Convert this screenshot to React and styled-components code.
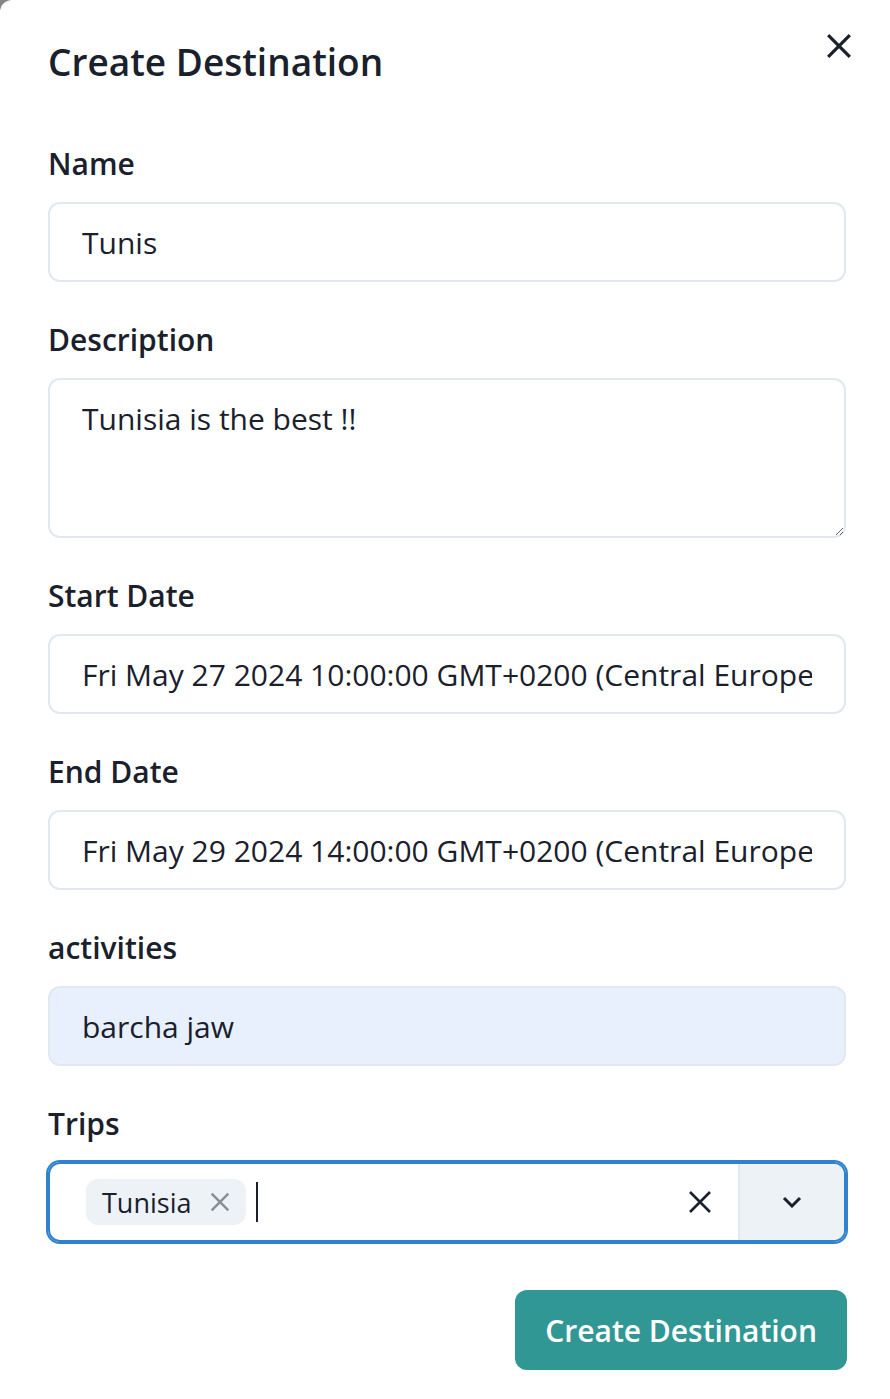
import React from "react";
import styled, { createGlobalStyle } from "styled-components";

const Global = createGlobalStyle`
  html, body { margin: 0; padding: 0; background: #858585; }
  * { box-sizing: border-box; }
  body { font-family: "Open Sans", "Noto Sans", sans-serif; color: #1a202c; }
`;

const Modal = styled.section`
  width: 890px;
  min-height: 1399px;
  background: #fff;
  border-top-left-radius: 12px;
  display: flex;
  flex-direction: column;
`;

const Header = styled.header`
  position: relative;
  padding: 32px 44px 32px 48px;
`;

const Title = styled.h2`
  margin: 0;
  font-size: 37px;
  line-height: 60px;
  font-weight: 600;
  color: #1a202c;
`;

const CloseButton = styled.button`
  position: absolute;
  top: 14px;
  right: 19px;
  width: 64px;
  height: 64px;
  border: 0;
  background: transparent;
  border-radius: 12px;
  display: flex;
  align-items: center;
  justify-content: center;
  padding: 0;
  color: #1a202c;
`;

const Body = styled.div`
  padding: 16px 44px 16px 48px;
  display: flex;
  flex-direction: column;
  gap: 34px;
`;

const Field = styled.div`
  display: flex;
  flex-direction: column;
  gap: 14px;
`;

const Label = styled.label`
  font-size: 30px;
  line-height: 48px;
  font-weight: 600;
  color: #1a202c;
`;

const TextInput = styled.input`
  width: 100%;
  height: 80px;
  padding: 0 32px;
  font: inherit;
  font-size: 30px;
  color: #1a202c;
  background: ${(p) => (p.$autofill ? "#e8f0fe" : "#fff")};
  border: 2px solid #e2e8f0;
  border-radius: 12px;
  outline: none;
`;

const TextArea = styled.textarea`
  width: 100%;
  height: 160px;
  padding: 16px 32px;
  font: inherit;
  font-size: 30px;
  line-height: 1.5;
  color: #1a202c;
  border: 2px solid #e2e8f0;
  border-radius: 12px;
  outline: none;
  resize: vertical;
`;

const SelectBox = styled.div`
  height: 80px;
  border: 2px solid #3182ce;
  box-shadow: 0 0 0 2px #3182ce;
  border-radius: 12px;
  display: flex;
  align-items: stretch;
  overflow: hidden;
`;

const ValueArea = styled.div`
  flex: 1;
  display: flex;
  align-items: center;
  padding: 0 26px 0 36px;
  gap: 10px;
`;

const Tag = styled.span`
  display: inline-flex;
  align-items: center;
  height: 46px;
  padding: 0 16px;
  gap: 18px;
  background: #edf2f7;
  border-radius: 12px;
  font-size: 27px;
  font-weight: 500;
  color: #1a202c;
`;

const TagClose = styled.span`
  display: flex;
  color: #8a8f96;
`;

const Caret = styled.span`
  width: 2px;
  height: 40px;
  background: #1a202c;
`;

const Spacer = styled.div`
  flex: 1;
`;

const ClearIcon = styled.span`
  display: flex;
  color: #1a202c;
`;

const DropArea = styled.div`
  width: 106px;
  background: #edf2f7;
  border-left: 2px solid #e2e8f0;
  display: flex;
  align-items: center;
  justify-content: center;
  color: #1a202c;
`;

const Footer = styled.footer`
  display: flex;
  justify-content: flex-end;
  padding: 32px 43px 32px 48px;
`;

const PrimaryButton = styled.button`
  height: 80px;
  padding: 0 30px;
  border: 0;
  border-radius: 12px;
  background: #319795;
  color: #fff;
  font: inherit;
  font-size: 30px;
  font-weight: 600;
`;

const XIcon = ({ size = 24, stroke = 3 }) => (
  <svg width={size} height={size} viewBox="0 0 24 24" fill="none" stroke="currentColor" strokeWidth={stroke} strokeLinecap="butt">
    <path d="M2 2 L22 22 M22 2 L2 22" />
  </svg>
);

const Chevron = () => (
  <svg width="20" height="12" viewBox="0 0 20 12" fill="none" stroke="currentColor" strokeWidth="3">
    <path d="M2 2 L10 10 L18 2" />
  </svg>
);

export default function App() {
  return (
    <>
      <Global />
      <Modal>
        <Header>
          <Title>Create Destination</Title>
          <CloseButton aria-label="Close">
            <XIcon size={26} stroke={3} />
          </CloseButton>
        </Header>
        <Body>
          <Field>
            <Label>Name</Label>
            <TextInput defaultValue="Tunis" />
          </Field>
          <Field>
            <Label>Description</Label>
            <TextArea defaultValue="Tunisia is the best !!" />
          </Field>
          <Field>
            <Label>Start Date</Label>
            <TextInput defaultValue="Fri May 27 2024 10:00:00 GMT+0200 (Central European Summer Time)" />
          </Field>
          <Field>
            <Label>End Date</Label>
            <TextInput defaultValue="Fri May 29 2024 14:00:00 GMT+0200 (Central European Summer Time)" />
          </Field>
          <Field>
            <Label>activities</Label>
            <TextInput $autofill defaultValue="barcha jaw" />
          </Field>
          <Field>
            <Label>Trips</Label>
            <SelectBox>
              <ValueArea>
                <Tag>
                  Tunisia
                  <TagClose>
                    <XIcon size={20} stroke={3} />
                  </TagClose>
                </Tag>
                <Caret />
                <Spacer />
                <ClearIcon>
                  <XIcon size={24} stroke={2.6} />
                </ClearIcon>
              </ValueArea>
              <DropArea>
                <Chevron />
              </DropArea>
            </SelectBox>
          </Field>
        </Body>
        <Footer>
          <PrimaryButton>Create Destination</PrimaryButton>
        </Footer>
      </Modal>
    </>
  );
}
